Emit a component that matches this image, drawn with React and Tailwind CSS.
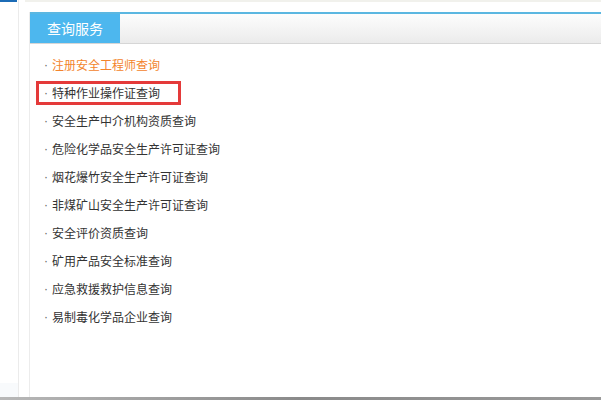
import React from 'react';

const items = [
    '注册安全工程师查询',
    '特种作业操作证查询',
    '安全生产中介机构资质查询',
    '危险化学品安全生产许可证查询',
    '烟花爆竹安全生产许可证查询',
    '非煤矿山安全生产许可证查询',
    '安全评价资质查询',
    '矿用产品安全标准查询',
    '应急救援救护信息查询',
    '易制毒化学品企业查询',
];

function QueryItem({ text, index }) {
    const active = index === 0;
    const marked = index === 1;
    return (
        <div className="h-[28px] flex items-center pl-[6px]">
            <div
                className={`h-[24px] flex items-center pl-[5px] pr-[18px] border-[3px] ${
                    marked ? 'border-[#e43a3a]' : 'border-transparent'
                }`}
            >
                <span
                    className="w-[8px] text-[#666]"
                    style={{ fontFamily: '"Liberation Sans", sans-serif' }}
                >
                    ·
                </span>
                <span className={active ? 'text-[#f3842c]' : 'text-[#333]'}>{text}</span>
            </div>
        </div>
    );
}

export default function App() {
    return (
        <div
            className="w-[601px] h-[400px] flex flex-col bg-white overflow-hidden text-[12px]"
            style={{ fontFamily: '"Noto Sans CJK SC", "Noto Sans", sans-serif' }}
        >
            <div className="flex-1 flex">
                {/* left rail */}
                <div className="w-[19px] border-r border-[#ebebeb] flex flex-col">
                    <div className="h-[2px] w-[17px] bg-[#1c6cb6]" />
                    <div className="flex-1" />
                    <div className="h-[14px] bg-[#f8fafc]" />
                </div>

                <div className="flex-1 flex flex-col">
                    <div className="h-[2px] ml-[6px] bg-[#f1f1ec]" />
                    <div className="flex-1 ml-[10px] mt-[10px] border-l border-[#ececec] flex flex-col">
                        {/* header */}
                        <div className="border-t-[2px] border-[#5bb7e1]">
                            <div className="h-[30px] flex bg-gradient-to-b from-[#fdfdfd] to-[#ebebeb] border-b border-[#d6d6d6]">
                                <div className="w-[90px] bg-[#4db7ee] flex items-center pl-[17px] text-white text-[14px]">
                                    查询服务
                                </div>
                            </div>
                        </div>

                        {/* list */}
                        <div className="pt-[7px]">
                            {items.map((t, i) => (
                                <QueryItem key={t} text={t} index={i} />
                            ))}
                        </div>
                    </div>
                </div>
            </div>
            <div className="h-[3px] bg-gradient-to-r from-[#b8b8b8] via-[#8a8a8a] to-[#9a9a9a]" />
        </div>
    );
}
